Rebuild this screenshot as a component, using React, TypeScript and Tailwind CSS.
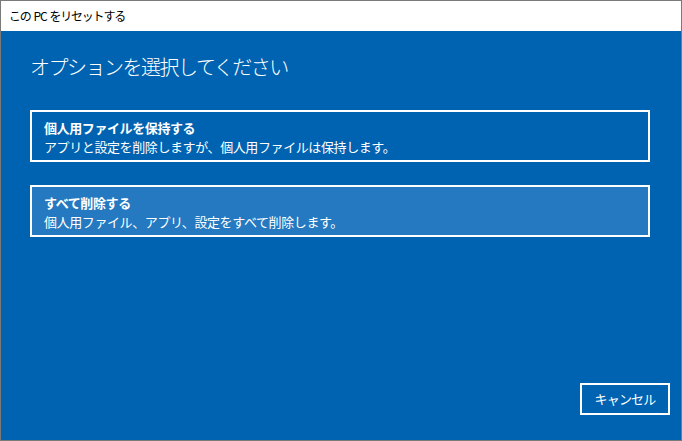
const font = { fontFamily: '"Noto Sans CJK JP", "Noto Sans", sans-serif' };

interface OptionProps {
	title: string;
	description: string;
	active?: boolean;
}

const OptionBox = (props: OptionProps) => {
	return (
		<div
			className={
				props.active
					? "w-[620px] h-[52px] border-2 border-white bg-[#2479c0] pl-[12px] pt-[6px] text-white"
					: "w-[620px] h-[52px] border-2 border-white pl-[12px] pt-[6px] text-white"
			}
		>
			<div className="text-[13px] leading-[19px] font-bold tracking-[-0.4px]">{props.title}</div>
			<div className="text-[13px] leading-[19px] tracking-[-0.4px]">{props.description}</div>
		</div>
	);
};

export default function App() {
	return (
		<div className="w-[682px] h-[441px] flex flex-col border border-[#7a7a7a] bg-[#0063b1]" style={font}>
			<div className="h-[30px] bg-white flex items-center pl-[8px] text-[12px] text-black tracking-[-1.2px] whitespace-pre">
				この  PC  をリセットする
			</div>

			<div className="flex-1 flex flex-col pl-[29px] pt-[22px] relative">
				<h1 className="text-[20px] leading-[28px] font-light text-white tracking-[-1.5px]">
					オプションを選択してください
				</h1>

				<div className="mt-[29px] flex flex-col gap-[23px]">
					<OptionBox
						title="個人用ファイルを保持する"
						description="アプリと設定を削除しますが、個人用ファイルは保持します。"
					/>
					<OptionBox
						title="すべて削除する"
						description="個人用ファイル、アプリ、設定をすべて削除します。"
						active
					/>
				</div>

				<div className="flex-1" />

				<div className="flex justify-end pr-[11px] pb-[25px]">
					<div className="w-[90px] h-[32px] border-2 border-white flex items-center justify-center text-white text-[13px] tracking-[-0.8px]">
						キャンセル
					</div>
				</div>
			</div>
		</div>
	);
}
